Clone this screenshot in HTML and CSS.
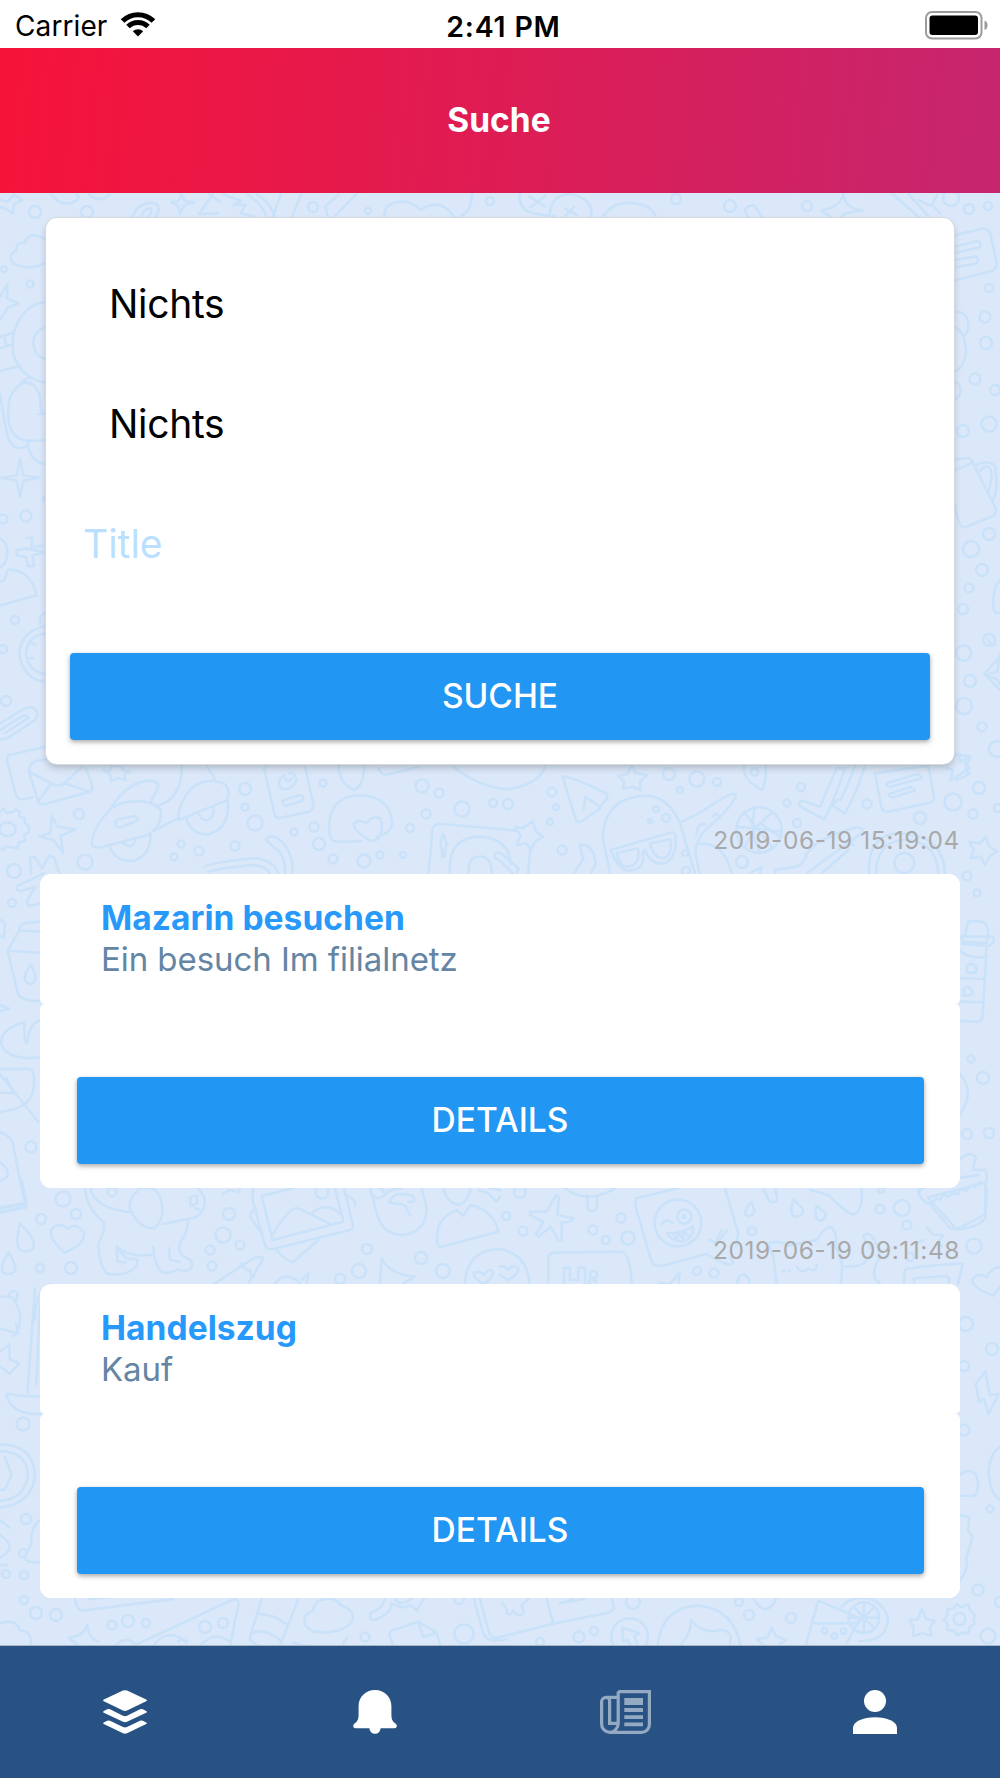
FILE: index.html
```html
<!DOCTYPE html>
<html lang="de">
<head>
  <meta charset="UTF-8">
  <meta name="viewport" content="width=device-width, initial-scale=1.0">
  <title>Suche</title>
  <link rel="stylesheet" href="styles.css">
</head>
<body>
<div class="statusbar">
  <div class="carrier">
    <span class="carrier-name">Carrier</span>
    <svg class="wifi" width="34" height="25" viewBox="0 0 34 25">
      <path class="arc" d="M1.6 9A21.8 21.8 0 0 1 32.4 9M7 14.6A14.2 14.2 0 0 1 27 14.6"/>
      <path d="M17 24.5L11.8 19.3A7.5 7.5 0 0 1 22.2 19.3Z"/>
    </svg>
  </div>
  <div class="time"><span>2:41 PM</span></div>
  <div class="battery">
    <svg width="63" height="29" viewBox="0 0 63 29">
      <rect x="1" y="1" width="55.5" height="26.5" rx="6" fill="none" stroke="#9b9b9b" stroke-width="2"/>
      <rect x="4.5" y="4.5" width="48.5" height="19.5" rx="3"/>
      <path d="M59.5 9.5c2.6 1 3 3 3 4.8s-.4 3.8-3 4.8z" fill="#9b9b9b"/>
    </svg>
  </div>
</div>

<header class="header"><h1>Suche</h1></header>

<main class="content">
  <svg class="doodles" id="doodles" viewBox="0 193 1000 1452">
    <!-- top edge -->
    <g transform="scale(.6378 .3333)">
      <path d="M0 600L12 605 22 583 35 600 22 612 20 640 8 625 0 622"/>
      <path d="M80 583Q95 622 115 606Q128 596 120 583M140 583Q155 612 172 583M208 650Q215 610 238 608Q256 615 244 650M222 650Q225 625 236 625Q240 630 233 650"/>
      <path d="M284 583L290 603 305 607 289 616 282 642 279 617 268 607 280 603ZM334 583L312 642 342 640M328 583L345 606M350 583L378 603 366 615 385 615 377 640 400 650"/>
      <path d="M388 583Q410 610 418 650M403 583Q425 610 431 650M440 583L428 650M472 583L458 650M514 650L510 620 531 583M524 650Q545 610 558 583M603 650Q600 605 635 605Q650 610 660 630Q690 590 712 650M740 583Q740 630 722 650"/>
      <path d="M815 583Q812 625 835 640L870 650M862 640Q865 583 895 583Q930 595 927 650M830 590L855 620M855 588L832 622M885 625L905 645M900 620L886 648M945 650Q960 608 985 608Q1020 610 1028 650"/>
      <path d="M1173 650Q1160 620 1182 616L1195 650M1322 583Q1325 625 1353 632Q1325 635 1320 650M1322 583Q1318 622 1287 632L1302 650M1400 583L1440 650M1425 583L1456 650M1440 600L1460 618 1470 583M1465 622L1474 640"/>
    </g>
    <!-- beside the search form, left -->
    <g transform="translate(0 180) scale(.3333 .3827)">
      <path d="M137 155Q85 130 75 165Q45 160 50 185Q20 195 40 218Q90 240 137 215M0 305L22 272 22 310 55 322 22 335 0 365M137 318Q70 325 45 390Q20 460 75 505Q105 525 137 530M137 385Q100 395 100 427Q105 465 137 466M0 410L38 400M0 440L40 428M12 407L20 435"/>
      <path d="M0 500Q30 490 60 487M0 560L20 660Q32 715 82 695M90 515Q65 525 62 532M125 612L118 560Q105 525 70 530Q25 550 25 600Q20 680 90 682L137 680M115 612L137 610M82 682Q90 740 137 742"/>
      <path d="M60 728L70 772 118 778 70 786 60 827 50 786 5 778 50 772ZM137 825Q120 832 137 842M0 937Q22 945 22 975Q20 1005 0 1012M80 935L97 935 95 960 130 955M130 972L98 982 102 1008 85 1010 78 985 52 982 48 968 78 962ZM0 1050L12 1045 25 1017Q95 1020 110 1085L0 1112"/>
      <path d="M137 1165Q60 1180 58 1240Q70 1305 137 1312M137 1185Q80 1190 78 1240Q85 1285 137 1292M120 1160Q115 1140 137 1130M88 1250L98 1250M95 1210L105 1215"/>
      <path d="M0 1420L75 1380Q105 1372 113 1395Q112 1410 90 1420L20 1460 0 1462M0 1438L65 1402Q82 1395 86 1405L15 1445"/>
    </g>
    <!-- beside the search form, right -->
    <g transform="translate(900 180) scale(.3333 .3827)">
      <path d="M160 145L250 127Q268 127 272 145L290 215Q292 232 275 238L160 263M160 175L230 160Q245 160 240 175L160 192M160 210L225 200Q240 205 230 218L160 229M160 345Q205 340 205 385Q200 405 190 410M160 382Q195 395 198 445Q195 490 160 502M165 527Q182 535 182 550Q180 570 165 572"/>
      <path d="M165 730L205 727Q220 732 218 738Q195 750 165 757M218 738L288 860Q290 875 275 880L195 907Q175 910 165 850M230 745Q255 730 285 745L290 790Q288 830 275 840M240 760Q260 740 272 755L275 780 265 815M300 1045Q275 1070 280 1120Q285 1135 300 1130M300 1240L292 1285 255 1293 292 1305 300 1320M160 1510L175 1500 182 1520 210 1508 195 1545 212 1550 170 1568"/>
    </g>
    <!-- below the search form, left half -->
    <g transform="translate(0 740) scale(.3827 .3333)">
      <path d="M120 20L25 45Q15 50 20 70L42 165Q48 180 62 178L85 172M75 95L100 185Q105 195 118 192L235 155Q245 150 240 135L225 85M75 95Q78 65 100 62L120 58M75 95L130 128Q155 145 170 128L215 80M98 186L134 130M168 130L235 155"/>
      <path d="M270 90L285 95 290 77 315 77 325 92 340 95 325 105 328 120 308 113 290 125 290 107Z"/>
      <path d="M290 205Q330 130 385 122Q420 122 412 145L392 190M290 205Q240 265 240 312Q245 325 265 322L385 285Q425 260 420 210Q390 170 315 190ZM475 77Q475 180 408 198M405 270L465 235M302 252Q298 240 315 237L350 228Q366 232 358 242L315 262Q302 265 302 252M285 318Q305 370 350 362Q395 345 393 282M320 306Q345 335 355 296"/>
      <path d="M468 240Q460 200 500 145Q545 105 590 135Q605 160 590 182ZM487 235Q500 285 545 283Q605 260 594 180M518 215Q525 245 545 240Q563 225 557 200M540 77L562 118M690 85L718 225Q722 238 740 232L808 215Q822 205 818 190L797 80M690 85L695 77M742 105Q720 125 735 145Q760 155 775 120Q770 95 755 100M745 113Q750 135 763 115M738 185Q735 180 785 165Q796 170 790 182L748 198Q738 195 738 185"/>
      <path d="M0 215L10 205 18 220 35 215 42 208 52 215 50 230 65 235 65 250 76 260 75 278 63 285 65 302 50 308 45 325 30 322 15 320 10 330 0 325"/><circle cx="20" cy="268" r="21"/>
      <path d="M135 228L150 260 198 268 158 288 165 340 140 300 103 290 132 278ZM82 400L78 355 90 350 110 385 128 347 140 350 155 400M115 400L45 438Q40 455 55 453L92 440 70 485 75 498 105 490"/>
      <path d="M860 260Q860 170 940 165Q1020 170 1025 250Q1020 282 985 290M860 260Q858 290 870 302Q890 308 945 303M968 303Q920 270 925 250Q938 235 958 250Q970 225 993 235Q1005 260 988 298ZM885 77Q885 130 925 150Q950 140 952 77M990 85Q995 110 1020 102L1095 80M1185 80Q1250 140 1325 148Q1410 135 1425 77"/>
      <path d="M1120 400L1130 270Q1132 250 1155 252L1350 272M1385 330L1380 400M1175 400Q1170 290 1255 290Q1330 295 1335 372M1225 400Q1220 350 1255 350Q1285 350 1285 400M1150 310L1158 282 1168 310 1162 330 1162 350 1155 350 1155 330ZM1292 345Q1300 330 1315 345L1355 385 1350 400M1292 345Q1290 358 1305 360L1340 400M1345 262L1365 265 1392 243 1400 275 1420 290 1398 305 1388 330 1375 310 1350 315 1360 285Z"/>
      <path d="M1470 110Q1480 105 1568 150M1470 110L1505 240Q1510 252 1525 240L1568 205M1568 202L1530 170 1525 208M1515 315Q1520 345 1525 355L1500 400M1515 315Q1550 310 1557 370L1545 400M535 380Q540 370 660 355Q710 355 728 400M545 395Q570 385 660 375Q690 375 705 400M695 300Q705 280 725 295Q765 325 765 400M695 300L730 335Q745 355 745 400"/>
    </g>
    <!-- below the search form, right half -->
    <g transform="translate(600 640) scale(.3333)">
      <path d="M95 373L107 400 141 405 120 425 122 450 95 440 70 447 72 425 55 408 82 403ZM0 453L20 460 22 475 0 500M30 700L8 590Q15 470 140 467Q205 470 240 550L285 700M32 630L210 578Q228 578 227 590Q230 655 195 670Q150 675 135 630Q125 635 130 650Q130 690 85 692Q55 690 32 630M50 640Q60 685 88 680Q120 675 115 625ZM150 610Q160 655 190 655Q220 645 210 598Z"/>
      <path d="M240 548Q300 520 320 505Q395 455 408 462Q405 490 340 550Q285 590 287 640L298 700M290 585Q290 550 315 552M340 530Q350 510 358 535M290 613Q370 600 395 700M432 375Q425 420 487 450Q500 420 497 375"/><circle cx="463" cy="397" r="11"/>
      <circle cx="477" cy="570" r="68"/><path d="M410 560L545 575M465 503Q445 570 480 637M480 550L540 590M435 520L515 620M515 520Q460 560 435 622"/>
      <path d="M710 385L735 385Q700 490 672 538L598 498Q595 480 612 483L660 500ZM765 378Q730 470 720 480Q700 480 700 498L735 520Q770 460 795 378M825 400L985 377 1003 475Q1000 488 980 490L865 515Q850 517 845 505ZM860 430L950 403Q965 405 965 415L872 440Q858 440 860 430M867 462L930 442Q945 445 945 452L880 472Q867 472 867 462M1065 342L1112 350 1095 372 1108 385 1050 423 1060 390 1040 385"/>
      <path d="M525 700L525 690 590 680Q615 670 620 640L650 610Q700 580 770 562Q795 565 785 580L620 700M740 605L760 615M745 630L665 700M808 700Q800 590 890 580Q1030 580 1035 700M828 700Q830 605 910 600Q1010 600 1015 700M450 700L485 680 480 700"/><circle cx="913" cy="669" r="30"/>
      <path d="M1157 590L1168 620 1192 635 1170 648 1155 675 1142 650 1112 655 1122 630 1107 605 1140 610ZM1155 100L1200 50M1155 104L1200 150M1165 0Q1170 15 1185 15M1105 843L1145 845Q1165 850 1165 880L1160 910 1090 905 1082 890 1095 885ZM1082 890L1180 890Q1188 910 1165 918L1085 912M1078 930Q1110 960 1162 950M1160 918L1148 1130Q1145 1145 1130 1145L1080 1143M1080 1015L1155 1017M1080 1085L1152 1087M1100 980Q1115 960 1130 985L1128 998 1102 998ZM1090 1048Q1108 1030 1120 1060L1112 1065 1092 1068Z"/>
      <circle cx="1091" cy="39" r="23"/>
    </g>
    <!-- next to the result cards -->
    <g transform="translate(0 860) scale(.6378 .5038)">
      <path d="M0 118L8 125 6 155 0 150M63 122L40 125Q30 128 30 140L63 142M30 140L12 180 28 265Q32 280 63 280M12 180L63 184M48 208Q30 240 48 247Q63 240 48 208M0 288L15 295 0 300M63 318Q45 325 43 362Q38 370 38 322Q0 335 2 365Q10 398 63 392M0 415L48 415Q55 425 53 450Q50 495 0 500M0 425L60 520M10 432L20 460M0 462L25 463M0 540Q22 550 22 575L40 690 0 700M0 690L42 680M0 600Q25 625 0 637"/>
      <path d="M0 867L15 867Q25 870 32 905Q30 940 20 945M14 862Q18 850 28 860L24 880M0 930L28 940 25 920M0 975L15 962 15 990 30 1000 15 1020 0 1005M55 850L43 1058M63 870L57 1040M10 1060Q40 1065 63 1065M10 1060Q15 1100 63 1100M0 1160Q52 1160 55 1220Q50 1280 0 1285M0 1173Q42 1175 44 1220Q40 1268 0 1272M8 1185L18 1220 8 1250 0 1250M0 1310L15 1325M0 1340Q30 1365 0 1385M63 1310Q50 1318 48 1360L38 1385Q40 1395 63 1394M0 1400L10 1400"/>
      <path d="M1505 425Q1530 460 1505 505M1505 595Q1520 575 1530 590L1525 615 1545 615Q1550 630 1545 640M1440 660Q1448 640 1535 625M1455 670L1545 640 1545 710Q1535 730 1500 733ZM1545 1015L1530 1040 1535 1075 1543 1070 1550 1100 1566 1060 1552 1062ZM1505 1220Q1520 1205 1530 1220Q1538 1245 1528 1262L1505 1262M1568 1165Q1550 1180 1550 1220Q1555 1262 1568 1270M1505 1300L1520 1305 1518 1330 1525 1345 1515 1385Q1520 1405 1505 1430"/>
    </g>
    <!-- between the cards, left half -->
    <g transform="translate(0 1180) scale(.3333)">
      <path d="M65 0L80 72Q80 80 0 97M0 88L75 70M60 132Q45 190 57 207Q75 220 100 207Q110 175 60 132M26 217Q0 255 8 277Q25 288 45 275Q50 255 26 217M193 218Q150 180 152 153Q170 120 205 147Q225 123 252 158Q255 195 193 218"/>
      <path d="M255 25Q260 85 310 125Q320 145 295 190Q295 250 320 280Q350 288 375 280Q420 265 410 238L378 235 350 200 352 245 378 247M272 25Q280 85 400 98M420 25Q370 70 400 105Q425 150 465 143Q500 110 480 50Q465 15 420 25M487 132Q560 118 590 110Q620 90 612 50L595 25M565 120Q560 165 542 185Q530 210 550 230Q580 235 575 262Q560 280 535 268Q500 285 485 275Q462 255 460 200M355 205Q400 235 460 223M508 205L510 240 540 245M570 52L590 46 592 70 572 78ZM585 85L598 88"/>
      <path d="M645 310L760 235Q795 225 788 240L745 310M725 250Q735 275 752 270Q750 295 762 290M758 60L758 25M758 60L795 195Q800 210 820 207L1050 150Q1062 145 1058 130L1032 25M785 48L880 25M785 48L818 180 1030 125 1005 25M820 160Q870 80 890 85Q910 90 990 132M935 100Q980 60 1025 105M750 110Q755 90 768 85M750 110L785 160M830 210Q865 250 880 245L955 180M1040 45Q1070 60 1065 78"/>
      <path d="M1110 25L1135 115Q1155 165 1210 165Q1280 155 1280 85L1265 25M1115 40Q1130 65 1155 45Q1150 25 1140 25M1155 45Q1170 25 1205 25M1168 68L1205 73Q1220 75 1220 90L1230 105M1170 65Q1180 30 1240 48Q1250 70 1225 65M1330 25Q1340 70 1378 75Q1408 60 1412 25M1312 170Q1310 115 1370 90L1390 107 1412 75Q1480 90 1495 155L1325 200Q1308 200 1312 170M668 42L690 30 715 37 720 25M1140 310L1145 235Q1170 285 1245 290L1210 310M1395 310Q1400 210 1500 207M1450 312Q1415 290 1422 278Q1440 270 1452 285Q1470 260 1478 275Q1480 295 1450 312M825 310Q860 270 900 310M905 300L925 280 920 310M1435 30L1465 40 1490 65 1500 50M1470 25L1500 30"/>
      <path d="M105 420Q105 330 150 312"/>
    </g>
    <!-- between the cards, right half -->
    <g transform="translate(500 1180) scale(.3333)">
      <path d="M90 95L140 95 168 45 177 52 172 105 220 115Q222 125 185 128L185 180 175 182 152 140 115 170 107 165 130 125 90 105ZM195 25Q260 75 345 25M262 45L262 80Q270 105 290 85L292 45M410 55L535 25M410 55Q403 65 408 85L455 245Q462 260 485 258L620 222Q690 265 700 248L690 230M675 25L715 160 708 200"/>
      <circle cx="534" cy="129" r="70"/><circle cx="553" cy="110" r="21"/><circle cx="553" cy="110" r="4"/><path d="M487 132Q495 115 518 128M502 160Q550 160 580 138Q580 180 545 185Q510 180 502 160M520 163L530 180 535 160 550 178 550 155 572 172M628 180L645 188 665 150M650 190L680 152M790 25L805 60Q825 75 832 55L825 25M755 67Q730 90 737 105Q752 115 764 95ZM880 58Q865 110 890 110Q915 105 908 85ZM950 78Q940 115 960 122Q980 115 977 100ZM930 30L985 45Q1040 100 1060 103Q1090 95 1085 25"/>
      <path d="M820 230L805 190Q840 180 865 197L950 180Q985 125 1000 148Q1015 175 1005 200Q1035 235 1022 310M820 230L830 310M848 273H852M865 273H870M890 260Q905 285 925 265Q950 280 950 255M1025 258Q1085 265 1100 240L1120 215 1090 170Q1100 150 1120 175Q1150 220 1130 250Q1110 290 1140 310M1280 143L1300 165 1330 165 1315 185 1325 200M1250 190L1270 180ZM1215 270Q1220 262 1388 250L1375 310M1215 270L1212 310M1242 295L1340 288Q1352 295 1345 308M1242 295V310"/>
      <path d="M1255 25Q1255 60 1290 72M1290 72L1350 145Q1370 155 1450 105Q1462 100 1460 25M1290 72L1310 55 1320 60 1330 45 1345 50 1355 40 1375 42 1385 28 1400 32 1412 18 1425 22 1440 5M1480 347Q1410 320 1418 298Q1435 275 1460 292Q1475 262 1500 262M1480 347L1500 320M145 310V235Q145 218 170 218L365 215Q390 220 395 310M192 310V263H210V300H235V263H255V310M268 310V300H288V310M0 207Q85 225 88 310M0 260Q15 255 25 270Q40 250 55 265Q58 280 25 300L0 285M478 310L510 312 540 277 535 310M712 310Q715 280 735 285Q750 295 748 310"/><circle cx="280" cy="284" r="11"/>
    </g>
    <!-- above the tab bar -->
    <g transform="translate(0 1580) scale(.3333)">
      <path d="M0 130Q50 115 58 150Q100 155 92 198M262 135Q265 175 295 185M262 135Q245 175 205 172L235 198M225 57Q230 90 245 92L520 57M265 57L345 50M400 198L700 58Q718 55 715 75L690 198M460 198Q500 140 560 185M345 198Q375 165 405 192M600 198Q640 150 690 185M535 185Q545 170 558 188M785 57L750 170Q750 190 780 198M895 57L840 198M775 102Q820 100 862 135M760 158Q800 145 842 182M940 155Q905 135 915 115Q918 95 938 95Q950 55 970 60Q1000 45 1022 75Q1065 90 1058 120Q1040 155 970 158ZM880 188L920 198M1042 172L1030 190"/>
      <path d="M1155 57Q1145 90 1112 98Q1105 120 1125 120Q1175 100 1175 70M1180 72Q1215 90 1232 75L1250 92 1272 57M1185 57Q1200 80 1235 57M1180 198L1168 165Q1165 155 1180 150L1255 125 1310 158 1322 198M1255 125L1270 172 1310 158M1422 57L1450 160Q1458 180 1480 182L1520 178M1440 57L1465 150Q1470 170 1485 175L1665 130M1505 70Q1525 85 1520 100Q1530 110 1540 92Q1555 115 1572 98L1565 75 1585 57M1640 57L1660 130M1680 70L1720 57M1680 70L1752 57M1665 130L1825 98Q1845 90 1840 70L1835 57"/>
      <circle cx="1889" cy="170" r="55"/><path d="M1867 143L1918 160 1903 170 1912 190M1867 143L1870 185 1883 178 1890 195M1973 198Q1985 80 2095 77Q2200 85 2222 198M2040 198Q2075 160 2073 120Q2110 165 2160 150Q2200 150 2190 190M2262 57Q2280 90 2300 87Q2325 75 2328 57M2315 143L2328 168 2358 180 2338 192M2315 143L2303 172 2270 178 2290 195M2417 198L2455 62 2580 115M2435 130H2570M2580 115L2540 190M2525 80Q2570 35 2630 65Q2675 100 2660 140Q2645 185 2580 183"/>
      <circle cx="2592" cy="113" r="46"/><path d="M2592 67V160M2546 113H2638M2560 80L2624 146M2624 80L2560 146"/><circle cx="2474" cy="152" r="8"/><circle cx="2503" cy="168" r="8"/><circle cx="2531" cy="154" r="8"/>
      <path d="M2765 88L2780 118 2805 122 2790 142 2795 168 2768 160 2740 168 2742 142 2727 120 2752 118ZM2870 72L2885 82 2905 72 2912 92 2925 105 2920 118 2925 130 2910 140 2905 160 2888 158 2872 165 2862 152 2842 150 2842 130 2832 118 2843 105 2842 88 2862 85Z"/><circle cx="2879" cy="117" r="18"/>
    </g>
  </svg>

  <form class="card search">
    <div class="field picker"><span>Nichts</span></div>
    <div class="field picker"><span>Nichts</span></div>
    <div class="field placeholder"><span>Title</span></div>
    <button type="button" class="btn"><span>SUCHE</span></button>
  </form>

  <section class="result">
    <div class="date"><span>2019-06-19 15:19:04</span></div>
    <div class="result-head">
      <h2><span>Mazarin besuchen</span></h2>
      <p><span>Ein besuch Im filialnetz</span></p>
    </div>
    <div class="result-body">
      <button type="button" class="btn"><span>DETAILS</span></button>
    </div>
  </section>

  <section class="result">
    <div class="date"><span>2019-06-19 09:11:48</span></div>
    <div class="result-head">
      <h2><span>Handelszug</span></h2>
      <p><span>Kauf</span></p>
    </div>
    <div class="result-body">
      <button type="button" class="btn"><span>DETAILS</span></button>
    </div>
  </section>
</main>

<nav class="tabbar">
  <a class="tab">
    <svg width="44" height="44" viewBox="0 0 44 44">
      <path d="M20 .6Q22-.3 24 .6L43.2 9.6Q44.5 10.5 43.2 11.3L24 20.5Q22 21.4 20 20.5L.8 11.3Q-.5 10.5 .8 9.6Z"/>
      <path d="M.8 21L4.2 19.3Q5.5 18.7 7 19.3L20 25.7Q22 26.6 24 25.7L37 19.3Q38.5 18.7 39.8 19.3L43.2 21Q44.5 21.9 43.2 22.7L24 31.8Q22 32.7 20 31.8L.8 22.7Q-.5 21.9 .8 21Z"/>
      <path d="M.8 32.4L4.2 30.7Q5.5 30.1 7 30.7L20 37.1Q22 38 24 37.1L37 30.7Q38.5 30.1 39.8 30.7L43.2 32.4Q44.5 33.3 43.2 34.1L24 43.2Q22 44.1 20 43.2L.8 34.1Q-.5 33.3 .8 32.4Z"/>
    </svg>
  </a>
  <a class="tab">
    <svg width="44" height="44" viewBox="0 0 44 44">
      <path d="M22 0C12.5 0 5.6 7 5.6 16V24C5.6 29.5 4.5 31.5 1.5 33.6C-.8 35.5 .1 38.2 2.5 38.2H16.4A5.6 5.6 0 0 0 27.6 38.2H41.5C43.9 38.2 44.8 35.5 42.5 33.6C39.5 31.5 38.4 29.5 38.4 24V16C38.4 7 31.5 0 22 0Z"/>
    </svg>
  </a>
  <a class="tab active">
    <svg width="51" height="44" viewBox="0 0 51 44">
      <path class="line" d="M18.2 1.6H49.4V34.5A8 8 0 0 1 41.4 42.4H10A8.4 8.4 0 0 1 1.6 34V11.6A4.5 4.5 0 0 1 6.1 7.3H18.2M18.2 1.6V33.5A9 9 0 0 1 10 42.4M6.5 7.5Q9.6 8 9.6 11V33.3H18"/>
      <path d="M24.3 8H43V15H24.3ZM24.3 18H43V22H24.3ZM24.3 25.3H43V29H24.3ZM24.3 32.6H43V36.2H24.3Z"/>
    </svg>
  </a>
  <a class="tab">
    <svg width="44" height="44" viewBox="0 0 44 44">
      <circle cx="22" cy="11" r="11"/>
      <path d="M0 44V38C0 31.5 10 27.3 22 27.3S44 31.5 44 38V44Z"/>
    </svg>
  </a>
</nav>

<script>
  // small bubbles of the wallpaper: x, y, radius
  const bubbles = [
    [35,212,6],[87,212,6],[313,207,5],[368,211,3],[490,201,4],[676,199,5],[730,206,6],[807,206,5],[951,198,8],[969,209,5],[988,206,4],
    [4,269,3],[30,284,3.5],[26,516,5.5],[3,519,4.5],[15,620,4],[3,649,4],[6,701,5],
    [989,288,4],[985,317,5.5],[986,343,6],[975,379,5.5],[995,390,5],[963,431,6],[989,424,7.5],[989,534,6],[971,549,8],[982,570,6],
    [969,588,4.5],[963,609,5],[989,640,6],[970,681,6],[964,706,8],[982,727,4.5],[997,749,8],
    [245,789,6],[245,807,3.5],[255,823,7.5],[79,814,5],[294,832,3.5],[314,827,4.5],[319,844,6],[333,859,4.5],[364,861,6.5],[380,855,3.5],
    [403,855,3],[410,828,4],[426,814,4.5],[323,783,3.5],[422,786,6.5],[439,793,4.5],[462,809,7.5],[493,803,4],[508,804,5],[552,792,4.5],
    [556,807,3],[550,822,3],[562,850,4.5],[181,844,3.5],[174,857,3.5],[199,851,4.5],[235,846,4.5],[85,862,7.5],[14,871,7],[12,903,4],
    [669,774,6],[697,779,7.5],[680,790,3],[717,782,4],[801,787,4],[787,803,3.5],[797,823,4],[867,804,4.5],[920,818,6],[953,802,8.5],
    [979,788,6],[973,814,4.5],[656,809,3],[666,818,4],[650,821,2],[685,853,3],[742,862,6],[967,876,4.5],[977,893,3.5],[686,871,4],[998,808,4],
    [983,1078,6],[967,1134,5],[989,1133,5],[971,1059,3.5],[966,1324,7],[992,1349,6],[964,1366,5],[964,1430,5.5],[990,1509,3.5],
    [31,1147,5.5],[23,1424,6.5],[26,1519,5],[23,1553,4],[6,1574,4],[24,1575,4],[24,1600,4],
    [63,1199,7.5],[41,1219,5],[76,1214,5],[40,1268,4],[71,1268,6],[112,1192,4.5],[229,1214,6],[223,1235,7.5],[240,1245,4.5],[210,1250,4.5],
    [212,1266,4.5],[322,1192,6.5],[367,1249,5],[359,1271,7],[340,1279,5],[421,1258,6],[443,1271,7],
    [520,1192,6],[506,1216,4],[523,1231,4.5],[593,1230,4.5],[621,1218,4.5],[606,1240,4],[628,1238,6.5],[752,1231,4],[697,1271,4],[714,1273,4.5],
    [880,1209,4.5],[902,1208,8],[907,1225,4.5],[974,1246,7.5],[910,1257,4],[881,1190,3],
    [36,1613,6],[56,1615,6],[112,1625,4.5],[128,1621,6],[146,1623,4],[205,1627,6],[223,1623,5],[365,1637,4.5],[464,1634,9.5],[459,1599,5],
    [633,1602,7],[579,1637,5.5],[594,1631,4],[739,1602,4],[749,1615,5],[791,1618,5],[978,1590,5.5],[988,1636,7.5],[540,1642,4],[1000,1602,5]
  ];
  const doodles = document.getElementById('doodles');
  bubbles.forEach(([x, y, r]) => {
    const c = document.createElementNS('http://www.w3.org/2000/svg', 'circle');
    c.setAttribute('cx', x);
    c.setAttribute('cy', y);
    c.setAttribute('r', r);
    doodles.appendChild(c);
  });
</script>
</body>
</html>
```
FILE: styles.css
```css
* { box-sizing: border-box; }
html, body { margin: 0; padding: 0; }
body {
  width: 1000px; height: 1778px;
  display: flex; flex-direction: column;
  font-family: Inter, "Liberation Sans", sans-serif;
  background: #dbe8f9; color: #000;
  overflow: hidden;
}
h1, h2, p { margin: 0; }

.statusbar {
  height: 48px; flex: none;
  display: grid; grid-template-columns: 1fr auto 1fr; align-items: center;
  padding: 0 12px 1px 15px;
  background: #fff;
  font-size: 28px;
}
.carrier { display: flex; align-items: center; gap: 14px; }
.carrier-name { letter-spacing: 0.1px; line-height: 47px; padding-top: 3px; }
.wifi { margin-bottom: 1px; }
.wifi .arc { fill: none; stroke: #000; stroke-width: 5; }
.time { font-weight: 600; font-size: 28.5px; letter-spacing: 0.8px; line-height: 47px; padding: 3px 0 0 4px; }
.battery { display: flex; justify-content: flex-end; }

.header {
  height: 145px; flex: none;
  display: flex; align-items: center; justify-content: center;
  padding: 0 2px 1px 0;
  background: linear-gradient(95deg, #f61339, #c6266f);
  color: #fff;
}
.header h1 { font-size: 33.5px; font-weight: 700; }

.content { position: relative; flex: 1; min-height: 0; padding: 25px 40px 0; }
.doodles { position: absolute; top: 0; left: 0; width: 1000px; height: 1452px; }
.doodles path, .doodles circle {
  fill: none; stroke: #cae2f9; stroke-width: 2.6;
  stroke-linecap: round; stroke-linejoin: round;
  vector-effect: non-scaling-stroke;
}

.card {
  position: relative;
  background: #fff; border-radius: 11px;
  box-shadow: 0 0 0 1px #d6d9dd, 0 4px 7px rgba(0,0,0,.2);
}
.search { height: 546px; margin: 0 6px; padding: 25px 24px 24px; }
.field { height: 120px; display: flex; align-items: center; font-size: 39px; letter-spacing: -0.3px; }
.picker { padding-left: 39px; }
.placeholder { padding-left: 13px; color: #bbdffe; margin-bottom: 50px; letter-spacing: 0; }

.btn {
  display: flex; align-items: center; justify-content: center;
  width: 100%; height: 87px; padding: 0 0 2px; border: 0;
  border-radius: 4px;
  background: #2196f3; color: #fff;
  font-family: inherit; font-size: 33.5px; font-weight: 450;
  box-shadow: 0 2px 5px rgba(0,0,0,.35);
}

.result { position: relative; margin-top: 42px; }
.search + .result { margin-top: 56px; }
.date {
  height: 40px; margin-bottom: 14px;
  text-align: right; line-height: 40px;
  font-size: 24.5px; letter-spacing: 0.55px; color: #a9a9a9;
}
.result-head { height: 130px; padding: 23px 62px 0 61px; background: #fff; border-radius: 11px 11px 5px 5px; }
.result-head h2 { font-size: 33.5px; line-height: 42px; font-weight: 700; letter-spacing: 0.05px; color: #2699fb; }
.result-head p { font-size: 33px; line-height: 41px; letter-spacing: -0.06px; color: #6485a3; }
.result-body { height: 184px; padding: 73px 36.5px 0; background: #fff; border-radius: 5px 5px 11px 11px; }

.tabbar {
  position: relative;
  height: 133px; flex: none;
  display: flex;
  background: #295284; border-top: 1px solid #a7b6c4;
}
.tab { flex: 1 1 0; min-width: 0; display: flex; justify-content: center; padding-top: 44px; fill: #fff; }
.tab.active { fill: #94a9c2; }
.tab .line { fill: none; stroke: #94a9c2; stroke-width: 3.2; }
```
